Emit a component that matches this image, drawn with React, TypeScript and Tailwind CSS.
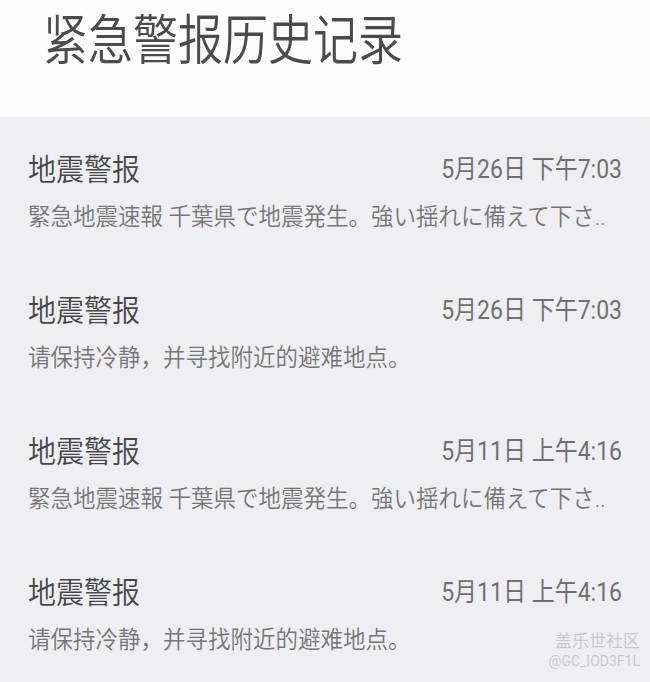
const font = { fontFamily: '"Roboto", "Noto Sans CJK SC", sans-serif' };

const alerts = [
  { date: '5月26日 下午7:03', body: '緊急地震速報 千葉県で地震発生。強い揺れに備えて下さ..' },
  { date: '5月26日 下午7:03', body: '请保持冷静，并寻找附近的避难地点。' },
  { date: '5月11日 上午4:16', body: '緊急地震速報 千葉県で地震発生。強い揺れに備えて下さ..' },
  { date: '5月11日 上午4:16', body: '请保持冷静，并寻找附近的避难地点。' },
];

export default function App() {
  return (
    <div className="relative flex h-[682px] w-[650px] flex-col overflow-hidden bg-[#efeff3]" style={font}>
      {/* header */}
      <div className="h-[117px] shrink-0 bg-[#fcfcfc] pl-[43px] pt-[10px]">
        <h1 className="origin-center scale-y-[1.2] text-[45px] leading-[64px] font-[350] text-[#4b4b4b]">
          紧急警报历史记录
        </h1>
      </div>

      {/* list */}
      <div className="flex flex-col">
        {alerts.map((a, i) => (
          <div key={i} className="flex h-[141px] flex-col px-[28px] pt-[36px]">
            <div className="flex items-center justify-between">
              <span className="scale-y-[1.06] text-[28px] leading-[34px] font-[350] text-[#474747]">地震警报</span>
              <span className="scale-y-[1.12] text-[23px] leading-[34px] font-normal text-[#707070]">{a.date}</span>
            </div>
            <div className="mt-[16px] scale-y-[1.06] text-[22.5px] leading-[28px] font-[350] text-[#767676]">
              {a.body}
            </div>
          </div>
        ))}
      </div>

      {/* watermark */}
      <div className="absolute right-[10px] bottom-[12px] flex flex-col items-end text-[#c8c8cc]">
        <span className="text-[17px] leading-[22px]">盖乐世社区</span>
        <span className="text-[14px] leading-[18px]">@GC_IOD3F1L</span>
      </div>
    </div>
  );
}
